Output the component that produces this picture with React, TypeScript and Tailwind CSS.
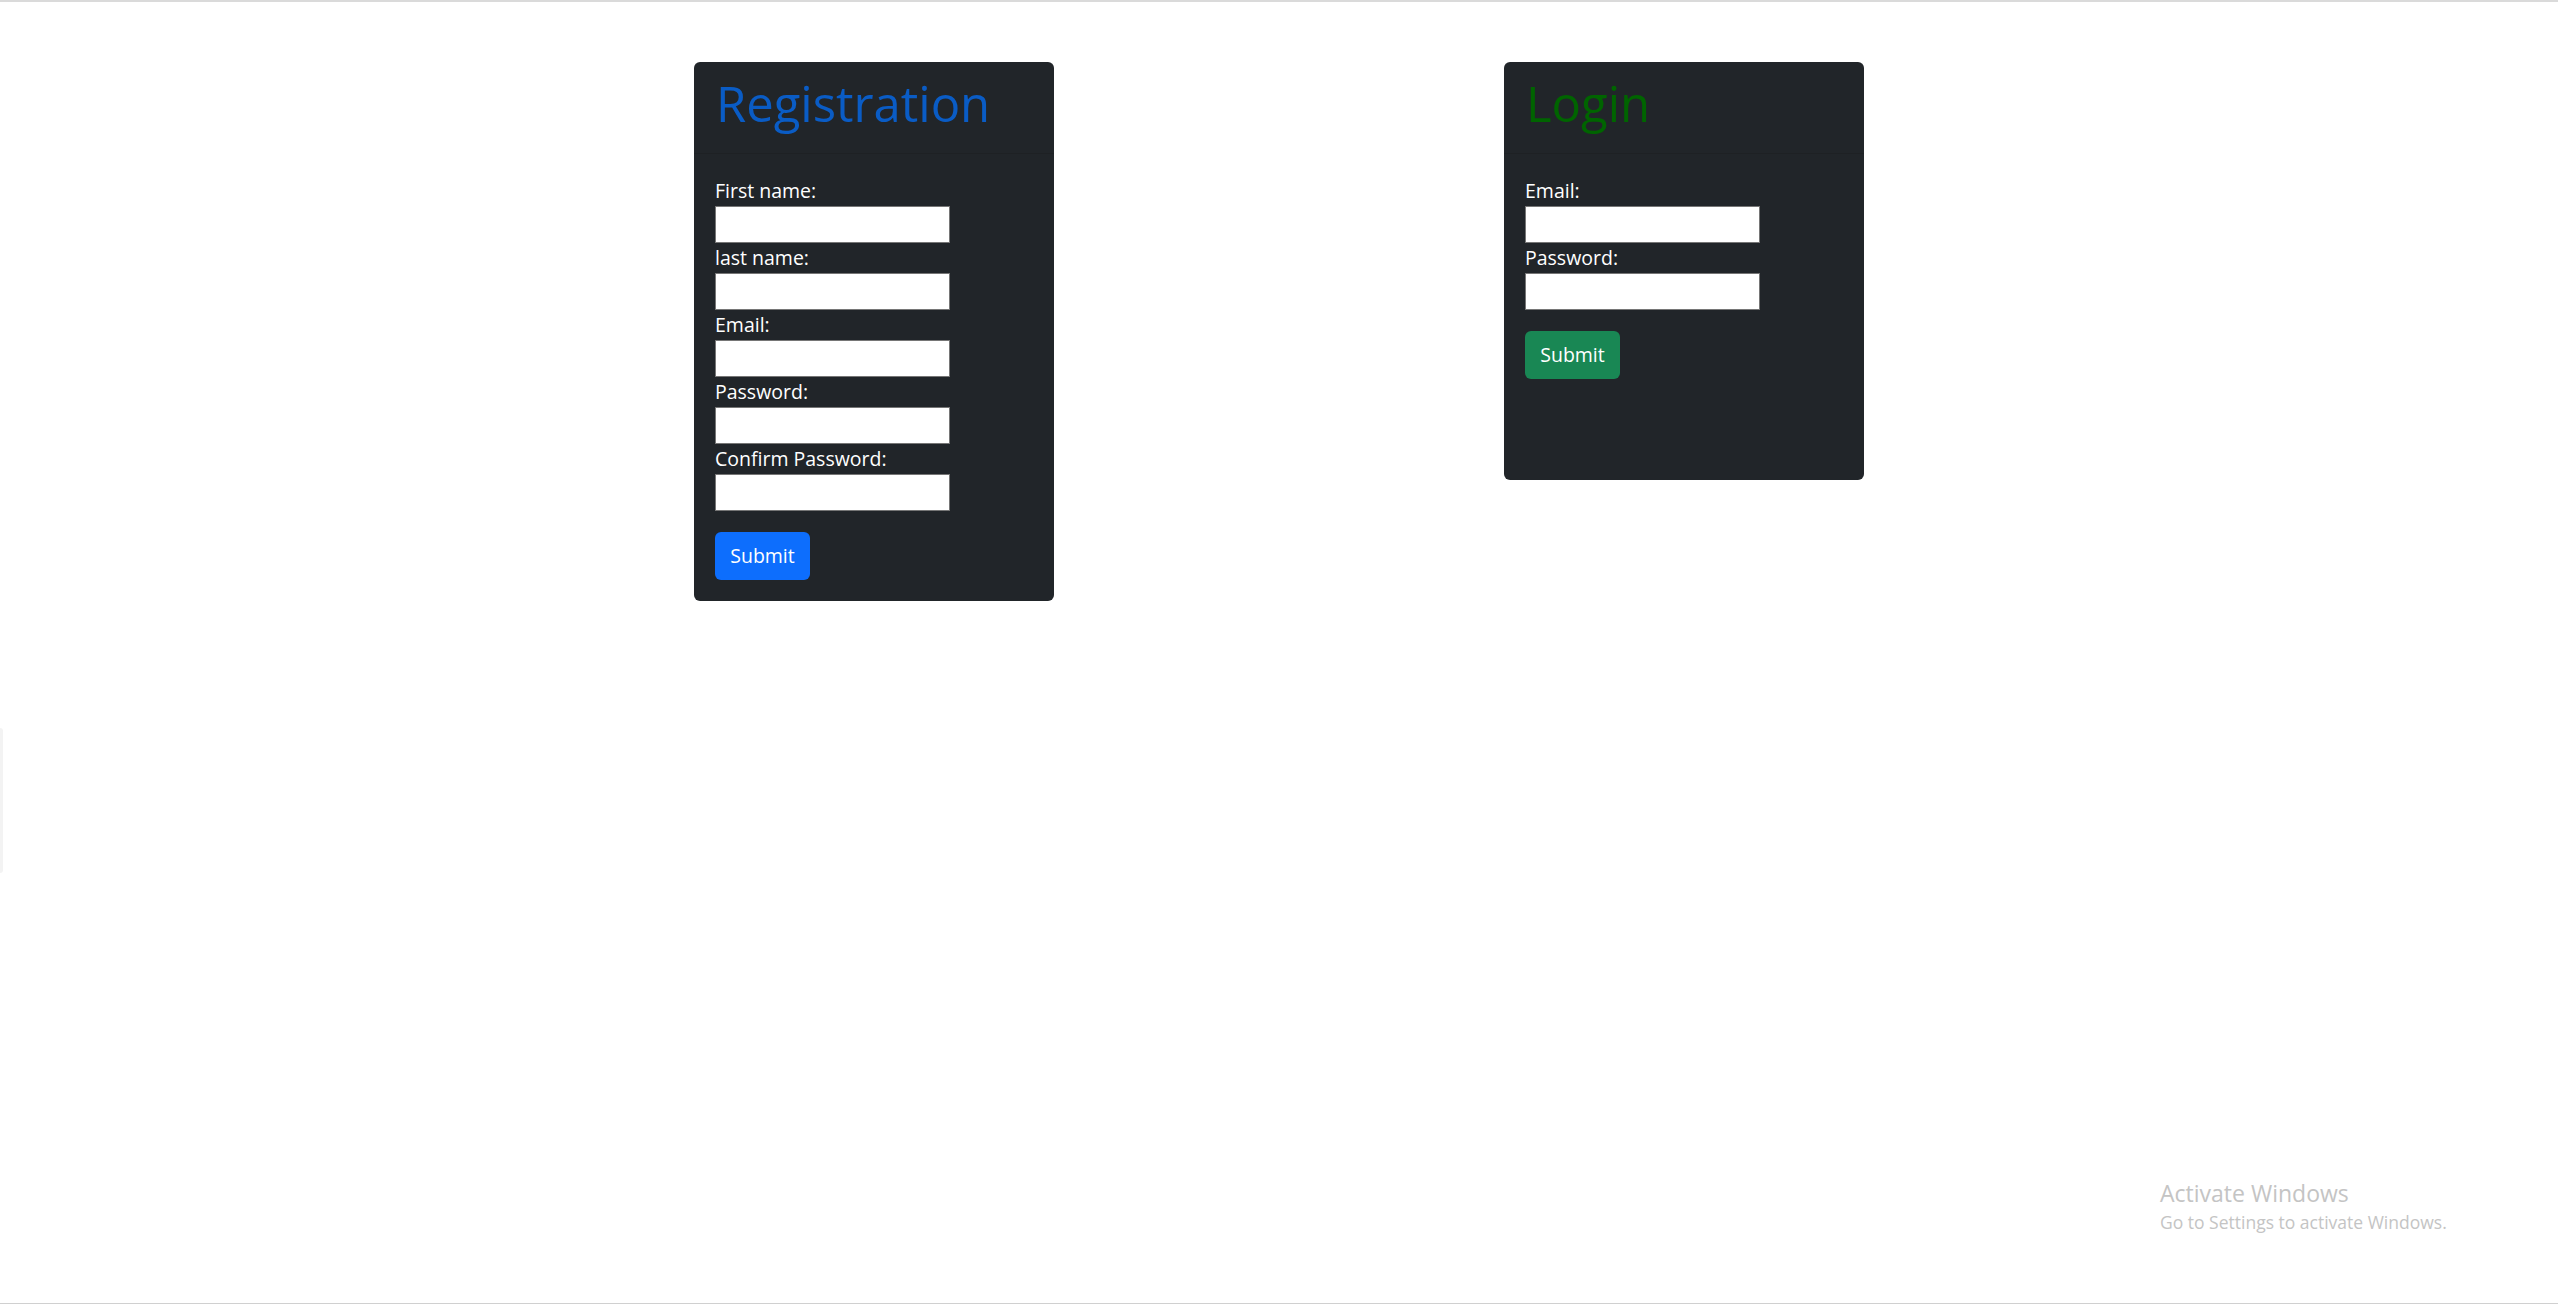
const font = "font-['Open_Sans','Noto_Sans',sans-serif]";

function Field({ label }: { label: string }) {
  return (
    <div className="flex flex-col">
      <label className="block h-[30px] text-[19.5px] leading-[30px] text-white">{label}</label>
      <input type="text" className="h-[37px] w-[235px] border border-[#767676] bg-white" />
    </div>
  );
}

function Card({
  title,
  titleColor,
  fields,
  button,
  height,
}: {
  title: string;
  titleColor: string;
  fields: string[];
  button: string;
  height?: string;
}) {
  return (
    <div className={`flex w-[360px] flex-col rounded-[6px] bg-[#212529] ${height ?? ""}`}>
      <div className="h-[92px] border-b border-[#1e2124] px-[22px] pt-[8px]">
        <h1 className={`text-[49px] leading-[67px] ${titleColor}`}>{title}</h1>
      </div>
      <div className="flex flex-col px-[21px] pb-[21px] pt-[22px]">
        {fields.map((f) => (
          <Field key={f} label={f} />
        ))}
        <button
          className={`mt-[21px] h-[48px] w-[95px] rounded-[6px] text-[19.5px] text-white ${button}`}
        >
          Submit
        </button>
      </div>
    </div>
  );
}

export default function App() {
  return (
    <div className={`relative h-[1304px] w-full overflow-hidden bg-white ${font}`}>
      <div className="h-[2px] w-full bg-[#dadada]" />
      <div className="flex items-start justify-center gap-[450px] pt-[60px]">
        <Card
          title="Registration"
          titleColor="text-[#0a5cc5]"
          fields={["First name:", "last name:", "Email:", "Password:", "Confirm Password:"]}
          button="bg-[#0d6efd]"
        />
        <Card
          title="Login"
          titleColor="text-[#006400]"
          fields={["Email:", "Password:"]}
          button="bg-[#198754]"
          height="h-[418px]"
        />
      </div>

      {/* faint edge tab at left */}
      <div className="absolute left-0 top-[728px] h-[145px] w-[3px] rounded-r bg-[#f3f3f3]" />

      {/* windows watermark */}
      <div className="absolute left-[2160px] top-[1178px] flex flex-col text-[#c4c4c4]">
        <span className="text-[23px] leading-[30px]">Activate Windows</span>
        <span className="mt-[2px] text-[17.5px] leading-[24px]">Go to Settings to activate Windows.</span>
      </div>

      <div className="absolute bottom-0 left-0 h-[1px] w-full bg-[#d0d0d0]" />
    </div>
  );
}
